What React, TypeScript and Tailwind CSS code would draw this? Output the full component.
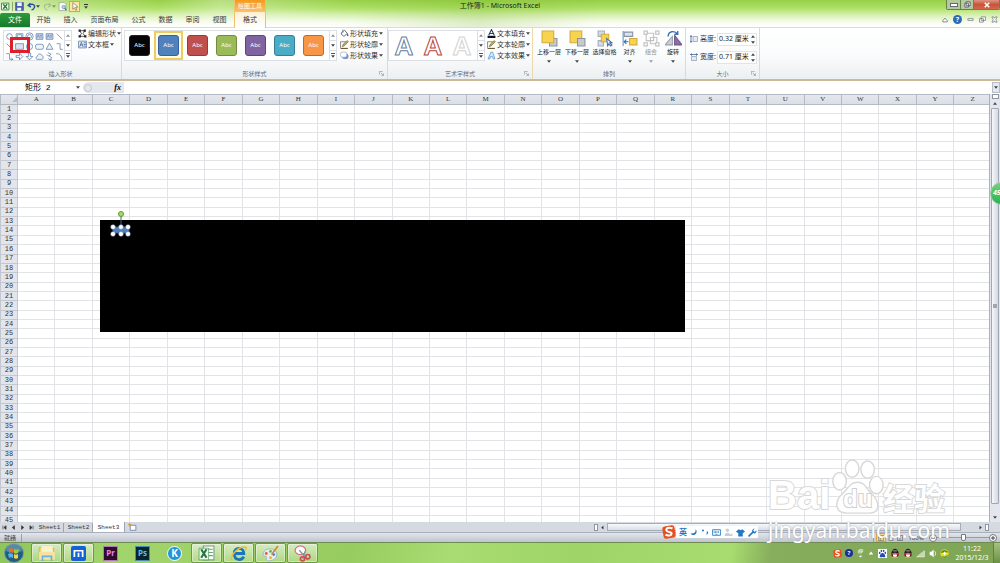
import type { ReactNode } from "react";

const columns = "ABCDEFGHIJKLMNOPQRSTUVWXYZ".split("");
const rows = Array.from({ length: 45 }, (_, i) => i + 1);

const tabs = [
  { name: "开始", width: "w-[27px]" },
  { name: "插入", width: "w-[27px]" },
  { name: "页面布局", width: "w-[41px]" },
  { name: "公式", width: "w-[27px]" },
  { name: "数据", width: "w-[27px]" },
  { name: "审阅", width: "w-[27px]" },
  { name: "视图", width: "w-[27px]" },
];

const swatches = [
  "bg-[#050505] border-[#222222]",
  "bg-[#4f81bd] border-[#38609a]",
  "bg-[#c0504d] border-[#963b39]",
  "bg-[#9bbb59] border-[#728c3d]",
  "bg-[#8064a2] border-[#5d477a]",
  "bg-[#4bacc6] border-[#348096]",
  "bg-[#f79646] border-[#bb6c2c]",
];

function Arrow({ up = false }: { up?: boolean }) {
  return (
    <svg viewBox="0 0 6 4" className="h-[3px] w-[4px] shrink-0 fill-[#444]">
      <path d={up ? "M0 4 3 0 6 4Z" : "M0 0h6L3 4Z"} />
    </svg>
  );
}

function Svg({ children, className = "h-[9px] w-[9px]" }: { children: ReactNode; className?: string }) {
  return (
    <svg viewBox="0 0 16 16" fill="none" className={`${className} shrink-0`}>
      {children}
    </svg>
  );
}

function Group({ title, width, children, launcher = true }: { title: string; width: string; children: ReactNode; launcher?: boolean }) {
  return (
    <section className={`${width} relative flex shrink-0 flex-col justify-between border-r border-[#ecd9ae] pt-[2px]`}>
      <div className="flex">{children}</div>
      <h2 className="text-center text-[6px] leading-[9px] text-[#5d6878]">{title}</h2>
      {launcher && (
        <button aria-label={title} className="absolute right-[3px] bottom-[3px]">
          <Svg className="h-[5px] w-[5px]">
            <path d="M1 12V1h11M6 6l8 8M14 8v6H8" stroke="#7d8693" strokeWidth="2" />
          </Svg>
        </button>
      )}
    </section>
  );
}

function Scroller() {
  return (
    <div className="flex w-[7px] flex-col border-l border-[#dcdfe3] bg-white">
      <button aria-label="上一行" className="flex flex-1 items-center justify-center opacity-60"><Arrow up /></button>
      <button aria-label="下一行" className="flex flex-1 items-center justify-center border-y border-[#dcdfe3]"><Arrow /></button>
      <button aria-label="其他" className="flex flex-1 flex-col items-center justify-center gap-px">
        <span className="h-px w-[4px] bg-[#555]" />
        <Arrow />
      </button>
    </div>
  );
}

function MenuItem({ icon, text }: { icon: ReactNode; text: string }) {
  return (
    <button className="flex h-[11px] items-center gap-[1px] whitespace-nowrap text-[7px] leading-[9px] text-[#333]">
      {icon}
      {text}
      <Arrow />
    </button>
  );
}

function BigButton({ icon, text, width, menu = true, off = false }: { icon: ReactNode; text: string; width: string; menu?: boolean; off?: boolean }) {
  return (
    <button className={`${width} ${off ? "opacity-50" : ""} flex flex-col items-center text-[6px] leading-[9px] whitespace-nowrap text-[#222]`}>
      {icon}
      <span className="mt-[1px]">{text}</span>
      {menu && <span className="mt-[3px]"><Arrow /></span>}
    </button>
  );
}

const shapes = [
  <circle cx="8" cy="8" r="5" />,
  <path d="M2 3h12v10H2zM4 5h8v6H4z" />,
  <g><circle cx="8" cy="8" r="6.5" /><circle cx="8" cy="8" r="3.5" /></g>,
  <path d="M2 3h12v10H2zM4 10l2-5 2 5M9 6h3M9 9h3" fill="#c9d8ec" />,
  <path d="M2 3h12v10H2zM4 10l2-5 2 5M9 6h3M9 9h3" fill="#c9d8ec" />,
  <path d="m3 3 10 10" />,
  <path d="m3 3 10 10" />,
  <path d="M1 3h14v10H1z" fill="#dbe5f2" />,
  <circle cx="8" cy="8" r="5.5" />,
  <rect x="1" y="4" width="14" height="9" rx="3" fill="#eef3fa" />,
  <path d="m8 2 6 11H2z" fill="#eef3fa" />,
  <path d="M3 3h6v10h5" />,
  <path d="M2 3h6v10h6m-3-3 3 3-3 2" />,
  <path d="M2 6h6V2l6 6-6 6v-4H2z" fill="#eef3fa" />,
  <path d="M6 2v6H2l6 6 6-6h-4V2z" fill="#eef3fa" />,
  <path d="M4 13c-4-1-2-5 0-5 0-5 7-6 8-2 4 1 3 7 0 7z" fill="#eef3fa" />,
  <path d="m5 1 6 3-4 3 5 3-3 4m-3-3 3 4 3-2M3 5l4 2" />,
  <path d="M2 3c7 0 9 3 11 11" />,
];

const textBox = (
  <Svg>
    <path d="M1 2h14v12H1z" fill="#e8f0fa" stroke="#6684ab" strokeWidth="1.5" />
    <path d="m3 12 3-8 3 8M4 9h4M10 5h4M10 8h4M10 11h4" stroke="#31598f" strokeWidth="1.3" />
  </Svg>
);
const pen = (
  <Svg>
    <path d="M1 14V3h9" stroke="#777" strokeWidth="1.5" />
    <path d="m4 12 2-5 7-6 2 2-7 7z" fill="#c9ad55" stroke="#655622" />
    <path d="M1 15h13" stroke="#6c5a36" strokeWidth="2" />
  </Svg>
);

function LetterA({ className }: { className: string }) {
  return <button aria-label="艺术字" className={`${className} w-[29px] pl-[1px] text-center font-[Arial,'Liberation_Sans',sans-serif] text-[26px] leading-[31px] font-bold text-white`}>A</button>;
}

function Size({ id, label, value, children }: { id: string; label: string; value: string; children: ReactNode }) {
  return (
    <div className="flex h-[14px] items-center gap-[1px] text-[7px] text-[#333]">
      <Svg className="h-[8px] w-[8px]">{children}</Svg>
      <label htmlFor={id} className="w-[17px] whitespace-nowrap pl-[1px]">{label}</label>
      <span className="flex h-[13px] flex-1 items-center border border-[#e1e4e8] bg-white">
        <input id={id} defaultValue={value} className="w-[32px] pl-[1px] text-[#222] outline-none" />
        <span className="flex flex-1 flex-col items-center gap-[3px]"><Arrow up /><Arrow /></span>
      </span>
    </div>
  );
}

function TitleBar() {
  return (
    <header className="relative h-[27px] shrink-0 bg-[linear-gradient(100deg,rgba(255,255,255,.6)_0,rgba(255,255,255,.25)_7%,transparent_16%,rgba(255,255,255,.3)_22%,transparent_35%,rgba(110,170,30,.2)_48%,transparent_60%),linear-gradient(#98cf48_0,#ace065_8px,#d7f0b1_15px,#f6fcec_22px,#ffffff_27px)]">
      <div className="flex h-[12px] items-center">
        <div className="flex w-[234px] items-center gap-[2px] pl-[1px]">
          <Svg>
            <path d="M1 2h13v12H1z" fill="#fff" stroke="#267a39" strokeWidth="1.5" />
            <path d="m4 4 7 8m0-8-7 8" stroke="#267a39" strokeWidth="2.5" />
          </Svg>
          <button aria-label="保存" className="flex border-l border-[#8aa56b] pl-[2px]">
            <Svg>
              <path d="M1 1h14v14H1z" fill="#4960b5" stroke="#33438d" />
              <path d="M4 1h8v6H4zM4 10h7v5H4z" fill="#f4f6fb" />
            </Svg>
          </button>
          <button aria-label="撤消" className="ml-[1px] flex items-center">
            <Svg><path d="M6 2 2 6l5 3M3 6c7-4 12-1 10 4-1 3-3 4-5 4" stroke="#2b4fae" strokeWidth="2.5" /></Svg>
            <Arrow />
          </button>
          <button aria-label="恢复" className="ml-[1px] flex items-center opacity-50">
            <Svg><path d="m10 2 4 4-5 3M13 6C6 2 1 5 3 10c1 3 3 4 5 4" stroke="#8b9a88" strokeWidth="2" /></Svg>
            <Arrow />
          </button>
          <button aria-label="打印预览" className="flex">
            <Svg>
              <path d="M2 1h9l3 3v11H2z" fill="#fff" stroke="#7f8896" />
              <circle cx="10" cy="9" r="3" fill="#bcd6f2" stroke="#4c6a92" />
              <path d="m12 11 3 4" stroke="#4c6a92" strokeWidth="2" />
            </Svg>
          </button>
          <button aria-label="选择对象" className="flex border border-[#e0a52d] bg-[#fde89a]">
            <Svg><path d="M5 1v12l3-3 2 5 2-1-2-5h4z" fill="#fff" stroke="#555" /></Svg>
          </button>
          <button aria-label="自定义" className="ml-[2px] flex flex-col items-center gap-px"><span className="h-px w-[4px] bg-[#333]" /><Arrow /></button>
        </div>
        <h1 className="flex-1 pr-[180px] text-center text-[7px] leading-[12px] text-[#222]">工作簿1 - Microsoft Excel</h1>
        <div className="flex h-[10px] w-[54px] self-start overflow-hidden rounded-b-[2px] border border-t-0 border-[#64834a]">
          <button aria-label="最小化" className="flex w-[14px] items-center justify-center border-r border-[#64834a] bg-[#b4ca9e]"><span className="h-[2px] w-[6px] bg-white outline outline-[#667]" /></button>
          <button aria-label="还原" className="flex w-[13px] items-center justify-center border-r border-[#64834a] bg-[#b4ca9e]">
            <Svg className="h-[7px] w-[7px]"><path d="M5 2h9v9H5zM2 5h8v9H2z" fill="#fff" stroke="#556" strokeWidth="2" /></Svg>
          </button>
          <button aria-label="关闭" className="flex flex-1 items-center justify-center bg-linear-to-b from-[#dc9583] via-[#c8523a] to-[#d36a4c]">
            <Svg className="h-[6px] w-[6px]"><path d="m2 2 12 12M14 2 2 14" stroke="#fff" strokeWidth="4" /></Svg>
          </button>
        </div>
      </div>
      <nav className="flex h-[15px] items-center text-[7px] text-[#3b3b3b]">
        <button className="mt-[1px] h-[14px] w-[30px] rounded-t-[2px] bg-linear-to-b from-[#2d9a3d] to-[#157a2c] text-white">文件</button>
        {tabs.map((t) => (
          <button key={t.name} className={`${t.width} pt-[2px] whitespace-nowrap`}>{t.name}</button>
        ))}
        <div className="flex-1" />
        <div className="flex items-center gap-[5px] pr-[2px]">
          <button aria-label="功能区最小化"><Svg className="h-[6px] w-[6px]"><path d="m2 10 6-7 6 7v3H2z" fill="#fff" stroke="#667" strokeWidth="2" /></Svg></button>
          <button aria-label="帮助" className="h-[9px] w-[9px] rounded-full bg-[#2f69b8] text-[7px] leading-[9px] font-bold text-white">?</button>
          <button aria-label="最小化窗口"><Svg className="h-[7px] w-[7px]"><path d="M2 6h12v4H2z" fill="#fff" stroke="#667" strokeWidth="1.5" /></Svg></button>
          <button aria-label="还原窗口"><Svg className="h-[7px] w-[7px]"><path d="M5 2h10v8H5zM1 6h9v8H1z" fill="#fff" stroke="#667" strokeWidth="1.5" /></Svg></button>
          <button aria-label="关闭窗口"><Svg className="h-[7px] w-[7px]"><path d="M2 2h4l2 3 2-3h4l-3 6 3 6h-4l-2-3-2 3H2l3-6z" fill="#fff" stroke="#667" strokeWidth="1.5" /></Svg></button>
        </div>
      </nav>
      {/* Contextual tab */}
      <div className="absolute top-0 left-[234px] flex h-[28px] w-[32px] flex-col border-x border-[#f0c070] bg-white text-center text-[7px]">
        <span className="h-[12px] bg-linear-to-b from-[#f39a1c] to-[#fbc266] text-[6px] leading-[12px] text-white">绘图工具</span>
        <button className="h-[15px] bg-linear-to-b from-[#fef0d3] to-white pt-[2px] text-[#3b3b3b]">格式</button>
      </div>
    </header>
  );
}

function Ribbon() {
  return (
    <div className="flex h-[54px] shrink-0 border-t border-b-2 border-t-[#ecd9ae] border-b-[#cdb995] bg-linear-to-b from-white via-[#fbfcfd] to-[#eceff2]">
      <Group title="插入形状" width="w-[122px]" launcher={false}>
        <div className="relative ml-[3px] flex h-[31px] border border-[#dcdfe3] bg-white">
          <div className="grid grid-cols-6">
            {shapes.map((s, i) => (
              <button key={i} aria-label={`形状 ${i + 1}`} className="flex h-[10px] w-[10px] items-center justify-center">
                <Svg className="h-[9px] w-[9px] stroke-[#5b7ba8] stroke-[1.3]">{s}</Svg>
              </button>
            ))}
          </div>
          <Scroller />
          <span className="absolute top-[6px] left-[6px] h-[16px] w-[20px] border-[3px] border-[#dd1f2c]" />
        </div>
        <div className="-mt-[2px] ml-[6px] flex flex-col">
          <MenuItem text="编辑形状" icon={<Svg><path d="M3 3h9L9 8l4 5H3l3-5z" stroke="#222" strokeWidth="1.3" /><path d="M1 1h4v4H1zM10 1h4v4h-4zM1 11h4v4H1zM11 11h4v4h-4z" fill="#222" /></Svg>} />
          <MenuItem text="文本框" icon={textBox} />
        </div>
      </Group>

      <Group title="形状样式" width="w-[266px]">
        <div className="ml-[2px] flex h-[31px] border border-[#dcdfe3] bg-white">
          {swatches.map((s, i) => (
            <button key={s} className={`flex h-[29px] w-[29px] items-center justify-center border-2 ${i === 1 ? "border-[#edcc60] bg-[#fffbe8]" : "border-transparent"}`}>
              <span className={`${s} flex h-[21px] w-[21px] items-center justify-center rounded-[3px] border text-[6px] text-white`}>Abc</span>
            </button>
          ))}
          <div className="w-[1px]" />
          <Scroller />
        </div>
        <div className="-mt-[2px] ml-[3px] flex flex-col">
          <MenuItem text="形状填充" icon={<Svg><path d="m3 6 5-4 5 6-6 5-5-4z" fill="#fff" stroke="#456" strokeWidth="1.5" /><path d="M13 7c2 3 3 6 1 6s-2-3-1-6" fill="#38609a" /><path d="M5 7V1" stroke="#456" /></Svg>} />
          <MenuItem text="形状轮廓" icon={pen} />
          <MenuItem text="形状效果" icon={<Svg><rect x="4" y="5" width="11" height="9" rx="3" fill="#7895c4" /><rect x="1" y="2" width="11" height="9" rx="3" fill="#fff" stroke="#7c9ccb" /></Svg>} />
        </div>
      </Group>

      <Group title="艺术字样式" width="w-[145px]">
        <div className="flex h-[31px] border border-[#dcdfe3] bg-white">
          <LetterA className="[-webkit-text-stroke:1px_#67809f]" />
          <LetterA className="[-webkit-text-stroke:1px_#b94441]" />
          <LetterA className="[-webkit-text-stroke:1px_#d2d2d2]" />
          <div className="w-[1px]" />
          <Scroller />
        </div>
        <div className="-mt-[2px] ml-[2px] flex flex-col">
          <MenuItem text="文本填充" icon={<Svg><path d="m3 11 5-10 5 10M5 8h6" stroke="#27405f" strokeWidth="2" /><path d="M1 12h14v4H1z" fill="#111" /></Svg>} />
          <MenuItem text="文本轮廓" icon={pen} />
          <MenuItem text="文本效果" icon={<Svg><path d="M2 14 7 2h3l4 12h-3l-1-4H6l-1 4z" fill="#d6eafa" stroke="#5c9fda" strokeWidth="1.5" /></Svg>} />
        </div>
      </Group>

      <Group title="排列" width="w-[153px]" launcher={false}>
        <BigButton width="ml-[2px] w-[28px]" text="上移一层" icon={<Svg className="h-[17px] w-[17px]"><path d="M8 8h7v7H8z" fill="#c5cad1" stroke="#8d939b" /><path d="M1 1h11v11H1z" fill="#f7d34f" stroke="#d5ac35" /></Svg>} />
        <BigButton width="w-[28px]" text="下移一层" icon={<Svg className="h-[17px] w-[17px]"><path d="M1 1h11v11H1z" fill="#f7d34f" stroke="#d5ac35" /><path d="M8 8h7v7H8z" fill="#c5cad1" stroke="#8d939b" /></Svg>} />
        <BigButton width="w-[27px]" menu={false} text="选择窗格" icon={<Svg className="h-[17px] w-[17px]"><path d="M2 1h6v5H2zM2 10h5v5H2z" fill="#d4dce7" stroke="#a3adbb" /><path d="M5 4h7v7H5z" fill="#f7d34f" stroke="#d5ac35" /><path d="m10 8 1 7 1-2 2 2 1-1-2-2h2z" fill="#fff" stroke="#4670a8" /></Svg>} />
        <BigButton width="w-[23px]" text="对齐" icon={<Svg className="h-[17px] w-[17px]"><path d="M2 1v14" stroke="#6a90c5" /><path d="M3 2h8v4H3z" fill="#dbe3ee" stroke="#8793a4" /><path d="M8 8h7v6H8z" fill="#f7d34f" stroke="#d5ac35" /><path d="M7 11H3m2-2-2 2 2 2" stroke="#2d69b3" /></Svg>} />
        <BigButton width="w-[20px]" off text="组合" icon={<Svg className="h-[17px] w-[17px]"><path d="M3 3h7v7H3zM7 7h6v6H7z" stroke="#888" /><path d="M1 1h3v3H1zM12 1h3v3h-3zM1 12h3v3H1zM12 12h3v3h-3z" fill="#fff" stroke="#777" /></Svg>} />
        <BigButton width="w-[24px]" text="旋转" icon={<Svg className="h-[17px] w-[17px]"><path d="M7 6v8H0z" fill="#cbd0d8" stroke="#9da3ad" /><path d="M9 5v9h7z" fill="#8c6fa8" stroke="#73598c" /><path d="M3 6c0-5 6-6 9-2m0-3v3H9" stroke="#3b70b8" strokeWidth="1.3" /></Svg>} />
      </Group>

      <Group title="大小" width="w-[74px]">
        <div className="flex flex-1 flex-col gap-[4px] pt-[2px] pr-[2px] pl-[4px]">
          <Size id="shape-height" label="高度:" value="0.32 厘米"><path d="M6 3h9v10H6z" fill="#e3eaf3" stroke="#66768d" /><path d="M2 2v12M0 4l2-3 2 3M0 12l2 3 2-3" stroke="#345b91" strokeWidth="1.5" /></Size>
          <Size id="shape-width" label="宽度:" value="0.71 厘米"><path d="M3 7h10v8H3z" fill="#e3eaf3" stroke="#66768d" /><path d="M1 3h14M4 1 1 3l3 2M12 1l3 2-3 2" stroke="#345b91" strokeWidth="1.5" /></Size>
        </div>
      </Group>
    </div>
  );
}

function FormulaBar() {
  return (
    <div className="flex h-[13px] shrink-0 items-center bg-white text-[7px]">
      <input aria-label="名称框" defaultValue="矩形 2" className="w-[76px] pl-[25px] font-['Liberation_Mono','Noto_Sans_CJK_SC',monospace] text-[8px] leading-[11px] outline-none" />
      <Arrow />
      <div className="ml-[3px] flex h-[11px] w-[41px] items-center justify-between rounded-l-full bg-[#e4e7ec] pr-[3px]">
        <span className="ml-[1px] h-[8px] w-[8px] rounded-full border border-[#c5cad2]" />
        <button className="font-['Liberation_Serif',serif] text-[8px] font-bold italic">fx</button>
      </div>
      <input aria-label="编辑栏" className="min-w-0 flex-1 outline-none" />
      <button aria-label="展开编辑栏" className="flex h-[11px] w-[8px] items-center justify-center border border-[#b7bdc7] bg-[#e4e8ee]"><Arrow /></button>
    </div>
  );
}

function Sheet() {
  return (
    <main className="relative flex min-h-0 flex-1 overflow-hidden bg-white">
      <div className="min-w-0 flex-1 overflow-hidden">
        <table className="h-[432px] w-[calc(100%+3px)] table-fixed border-collapse font-['Liberation_Serif',serif] text-[7px] leading-[7px] text-[#333]">
          <thead>
            <tr className="h-[10px] bg-linear-to-b from-[#e4e8ed] to-[#d9dee5]">
              <th aria-label="全选" className="w-[17px] border border-[#b4bac4] p-0">
                <svg viewBox="0 0 6 6" className="ml-auto h-[5px] w-[5px] fill-[#b9c0ca]"><path d="M6 0v6H0z" /></svg>
              </th>
              {columns.map((c) => (
                <th key={c} className="border border-[#b4bac4] p-0 font-normal">{c}</th>
              ))}
            </tr>
          </thead>
          <tbody>
            {rows.map((r) => (
              <tr key={r}>
                <th className="border border-[#c3c8d0] bg-[#e2e6ec] p-0 font-['Liberation_Mono',monospace] font-normal">{r}</th>
                {columns.map((c) => (
                  <td key={c} className="border border-[#e2e3e6] p-0" />
                ))}
              </tr>
            ))}
          </tbody>
        </table>
      </div>
      <div className="flex w-[11px] flex-col items-center border-l border-[#aab1bd] bg-[#e3e7ed]">
        <span className="h-[5px] w-[7px] border border-[#8e96a3] bg-white" />
        <button aria-label="向上" className="flex h-[9px] items-center"><Arrow up /></button>
        <div className="flex w-[8px] flex-1 items-center justify-center rounded-[1px] border border-[#a0a8b6] bg-linear-to-r from-[#f6f8fa] to-[#d3d9e2]">
          <span className="h-[4px] w-[4px] bg-[#a0a6b0]" />
        </div>
        <button aria-label="向下" className="flex h-[18px] items-center pt-[8px]"><Arrow /></button>
      </div>

      {/* Drawn shapes */}
      <div className="absolute top-[126px] left-[100px] h-[112px] w-[585px] bg-black" />
      <svg viewBox="0 0 24 30" className="absolute top-[115px] left-[109px] h-[30px] w-[24px]">
        <path d="M12 5v14" stroke="#45617f" />
        <path d="M4 18h16v6H4z" fill="#4f81bd" stroke="#38609a" />
        <circle cx="12" cy="5" r="2.5" fill="#a7da67" stroke="#5c9a2c" />
        <g fill="#fff" stroke="#8fa5bd" strokeWidth=".5">
          <circle cx="4" cy="18" r="2.3" /><circle cx="12" cy="18" r="2.3" /><circle cx="19" cy="18" r="2.3" />
          <circle cx="4" cy="25" r="2.3" /><circle cx="12" cy="25" r="2.3" /><circle cx="19" cy="25" r="2.3" />
        </g>
      </svg>
      <button className="absolute top-[88px] -right-[13px] h-[23px] w-[23px] rounded-full border border-[#a7c9ad] bg-linear-to-b from-[#6bd47b] to-[#2db14c] pl-[2px] text-left text-[7px] font-bold text-white italic">45</button>
    </main>
  );
}

function SheetTabs() {
  return (
    <div className="flex h-[10px] shrink-0 items-center bg-[#d5dae1] font-['Liberation_Mono',monospace] text-[6px] leading-[9px] text-[#333]">
      <div className="flex w-[36px] items-center gap-[4px] pl-[2px]">
        {["M3 2v12M13 2 6 8l7 6z", "M11 2 4 8l7 6z", "m5 2 7 6-7 6z", "M13 2v12M3 2l7 6-7 6z"].map((d) => (
          <button key={d} aria-label="切换工作表" className="flex">
            <Svg className="h-[5px] w-[5px] fill-[#333] stroke-[#333] stroke-2"><path d={d} /></Svg>
          </button>
        ))}
      </div>
      <button className="w-[28px] border-r border-[#9ba3af]">Sheet1</button>
      <button className="w-[29px] border-r border-[#9ba3af] pl-[1px]">Sheet2</button>
      <button className="h-full w-[32px] border-r border-[#9ba3af] bg-white">Sheet3</button>
      <button aria-label="插入工作表" className="ml-[3px] flex">
        <Svg><path d="M4 4h10v9H4z" fill="#fff" stroke="#6681a8" strokeWidth="1.5" /><path d="M3 0v6M0 3h6" stroke="#e39a28" strokeWidth="2" /></Svg>
      </button>
      <div className="flex-1" />
      <div className="flex h-full w-[406px] items-center gap-[2px] pr-[11px]">
        <span className="h-[7px] w-[4px] border border-[#8e96a3] bg-white" />
        <Svg className="h-[5px] w-[5px]"><path d="m11 2-7 6 7 6z" fill="#333" /></Svg>
        <span className="h-[8px] w-[354px] border border-[#a5adba] bg-linear-to-b from-[#f7f9fb] to-[#d9dfe7]" />
        <span className="flex-1" />
        <Svg className="h-[5px] w-[5px]"><path d="m5 2 7 6-7 6z" fill="#333" /></Svg>
        <span className="h-[7px] w-[4px] border border-[#8e96a3] bg-white" />
      </div>
    </div>
  );
}

function StatusBar() {
  return (
    <footer className="flex h-[10px] shrink-0 items-center border-t border-[#a9b0bb] bg-linear-to-b from-[#e3e6eb] to-[#bfc5ce] text-[6px] leading-[8px] text-[#333]">
      <span className="w-[22px] border-r border-[#9aa1ac] pl-[4px]">就绪</span>
      <div className="flex-1" />
      <div className="flex items-center border-l border-[#9aa1ac] pl-[2px]">
        <button aria-label="普通" className="flex h-[9px] w-[10px] items-center justify-center border border-[#dca638] bg-[#fbdc83]"><Svg className="h-[6px] w-[6px]"><path d="M1 1h14v14H1zM1 6h14M6 1v14" stroke="#777" strokeWidth="2" /></Svg></button>
        <button aria-label="页面布局" className="flex w-[9px] justify-center"><Svg className="h-[6px] w-[6px]"><path d="M3 1h10v14H3z" fill="#eee" stroke="#666" strokeWidth="2" /></Svg></button>
        <button aria-label="分页预览" className="flex w-[9px] justify-center"><Svg className="h-[6px] w-[6px]"><path d="M1 1h14v14H1zM8 1v14" stroke="#666" strokeWidth="2" /></Svg></button>
      </div>
      <span className="w-[24px] text-center">100%</span>
      <button aria-label="缩小" className="ml-[1px] flex h-[8px] w-[8px] items-center justify-center rounded-full border border-[#777] bg-white"><Svg className="h-[4px] w-[4px]"><path d="M0 8h16" stroke="#444" strokeWidth="4" /></Svg></button>
      <input type="range" aria-label="显示比例" className="h-[8px] w-[52px] appearance-none bg-[linear-gradient(transparent_3px,#959ca7_3px,#959ca7_4px,transparent_4px)] [&::-webkit-slider-thumb]:h-[7px] [&::-webkit-slider-thumb]:w-[5px] [&::-webkit-slider-thumb]:appearance-none [&::-webkit-slider-thumb]:rounded-b-[2px] [&::-webkit-slider-thumb]:border [&::-webkit-slider-thumb]:border-[#777] [&::-webkit-slider-thumb]:bg-white" />
      <button aria-label="放大" className="mr-[3px] flex h-[8px] w-[8px] items-center justify-center rounded-full border border-[#777] bg-white"><Svg className="h-[4px] w-[4px]"><path d="M0 8h16M8 0v16" stroke="#444" strokeWidth="4" /></Svg></button>
    </footer>
  );
}

function Task({ label, open = false, children }: { label: string; open?: boolean; children: ReactNode }) {
  return (
    <button aria-label={label} className={`flex h-[20px] w-[31px] items-center justify-center rounded-[2px] border ${open ? "border-[#6f9a45] bg-linear-to-b from-white/60 to-white/20 inset-ring inset-ring-white/40" : "border-transparent"}`}>
      {children}
    </button>
  );
}

function Sogou({ className }: { className: string }) {
  return (
    <Svg className={className}>
      <rect x="1" y="1" width="14" height="14" rx="3" fill="#e8501e" transform="rotate(-10 8 8)" />
      <path d="M12 4C8 2 4 4 5 6c1 3 6 1 6 4 0 2-4 3-7 1" stroke="#fff" strokeWidth="2.3" />
    </Svg>
  );
}

function Qq() {
  return (
    <Svg className="h-[10px] w-[10px]">
      <ellipse cx="8" cy="9" rx="6" ry="6" fill="#222" />
      <circle cx="8" cy="5" r="4" fill="#222" />
      <ellipse cx="8" cy="11" rx="3.5" ry="3.5" fill="#fff" />
      <path d="M2 7c3 2 9 2 12 0v4c-3-1-9-1-12 0z" fill="#e02a3c" />
      <path d="M3 15h10" stroke="#f0a020" strokeWidth="2" />
      <circle cx="6.5" cy="4.5" r="1" fill="#fff" />
      <circle cx="9.5" cy="4.5" r="1" fill="#fff" />
    </Svg>
  );
}

function Taskbar() {
  return (
    <div className="flex h-[21px] shrink-0 items-center border-t border-[#6f8c52] bg-[linear-gradient(100deg,#8fc65a_0,#a2d46c_12%,#97cc60_35%,#a9dc72_45%,#9ed468_58%,#a8dc70_73%,#86ae5c_77%,#7fa456_100%)]">
      <button aria-label="开始" className="flex w-[31px] items-center pl-[4px]">
        <svg viewBox="0 0 20 20" className="h-[20px] w-[20px]">
          <circle cx="10" cy="10" r="9.5" fill="#245d7c" stroke="#6ba3a8" />
          <path d="M2 8a8 8 0 0 1 16 0c-5 2-11 2-16 0" fill="#8fb7c4" opacity=".5" />
          <path d="M5 6c2-1 3-1 4 0v4c-1-1-3-1-4 0z" fill="#ef6a30" />
          <path d="M10 6c2 1 3 1 5 0l-1 4c-2 1-3 1-4 0z" fill="#97cc43" />
          <path d="M4 11c2-1 3-1 5 0v4c-2-1-3-1-4 0z" fill="#54b2ef" />
          <path d="M10 11c1 1 3 1 4 0v4c-1 1-3 1-4 0z" fill="#fbd244" />
        </svg>
      </button>
      <div className="flex gap-[1px]">
        <Task label="资源管理器" open><Svg className="h-[18px] w-[18px]"><path d="M1 3h5l1 1h7v10H1z" fill="#efd37b" stroke="#d0a848" strokeWidth=".6" /><path d="M3 2h10v5H3z" fill="#fcf3cc" /><path d="M1 7h14v7H1z" fill="#f7e3a0" /><path d="M4 15v-4h8v4" stroke="#68b3df" strokeWidth="1.5" /></Svg></Task>
        <Task label="傲游" open><span className="flex h-[15px] w-[15px] items-center justify-center rounded-[2px] bg-[#1463d6]"><Svg className="h-[11px] w-[11px]"><path d="M2 13V4h12v9M8 7v6" stroke="#fff" strokeWidth="2.5" /></Svg></span></Task>
        <Task label="Premiere"><span className="h-[15px] w-[15px] border border-[#b07cb0] bg-[#32092f] text-[8px] leading-[12px] font-bold text-[#e588ec]">Pr</span></Task>
        <Task label="Photoshop"><span className="h-[15px] w-[15px] border border-[#4c8fa8] bg-[#092532] text-[8px] leading-[12px] font-bold text-[#55c5ee]">Ps</span></Task>
        <Task label="酷狗"><span className="h-[15px] w-[15px] rounded-full border border-white bg-[#2295d7] text-[10px] leading-[13px] font-bold text-white">K</span></Task>
        <Task label="Excel" open><Svg className="h-[17px] w-[17px]"><path d="M5 1h10v13H5z" fill="#fff" stroke="#7e9d84" /><path d="M8 4h6M8 7h6M8 10h6" stroke="#69a77a" /><path d="M1 3h9v11H1z" fill="#eef8ee" stroke="#35894a" strokeWidth=".6" /><path d="m3 4 5 8m0-8-5 8" stroke="#22783a" strokeWidth="2" /></Svg></Task>
        <Task label="Internet Explorer" open><Svg className="h-[17px] w-[17px]"><path d="M13 11c-2 4-9 4-9-3s9-6 9 0H5" stroke="#1976bd" strokeWidth="2.6" /><path d="M2 14c-3-2 5-13 13-12 1 1 0 2-1 3" stroke="#edbc32" strokeWidth="1.3" /></Svg></Task>
        <Task label="画图" open><Svg className="h-[17px] w-[17px]"><path d="M1 9c0-5 7-7 11-4 5 5 0 10-6 10-3 0-1-3-2-4S1 11 1 9" fill="#e4edf3" stroke="#8fa8b8" strokeWidth=".7" /><circle cx="4" cy="8" r="1.3" fill="#e55a3d" /><circle cx="8" cy="6" r="1.3" fill="#69b045" /><circle cx="11" cy="9" r="1.3" fill="#4286c8" /><circle cx="8" cy="12" r="1.3" fill="#e6b52f" /><path d="m9 9 6-8" stroke="#c88741" strokeWidth="1.5" /></Svg></Task>
        <Task label="截图工具" open><Svg className="h-[17px] w-[17px]"><ellipse cx="6" cy="5" rx="5" ry="4" fill="#fff" stroke="#cf6470" /><path d="m5 5 8 9M11 5l-3 8" stroke="#8695a0" strokeWidth="1.3" /><circle cx="8" cy="13" r="2" stroke="#d34951" strokeWidth="1.5" /><circle cx="13" cy="11" r="2" stroke="#d34951" strokeWidth="1.5" /></Svg></Task>
      </div>
      <div className="flex-1" />
      <div className="flex items-center gap-[3px]">
        <Sogou className="h-[9px] w-[9px]" />
        <span className="h-[8px] w-[8px] rounded-full bg-[#1d2f9c] text-center text-[6px] leading-[8px] font-bold text-white">?</span>
        <Svg className="h-[9px] w-[9px]"><path d="M6 1h6v4H6zM4 3h6v4H4z" stroke="#fff" /><path d="M5 12h6l-3 3z" fill="#fff" /></Svg>
        <Svg className="h-[6px] w-[6px]"><path d="m8 4 6 8H2z" fill="#fff" /></Svg>
        <Svg className="ml-[1px] h-[9px] w-[9px]"><path d="M0 0h16v16H0z" fill="#fff" /><path d="M3 13c0-3 3-6 5-6s5 3 5 6c0 2-3 2-5 1-2 1-5 1-5-1" fill="#2a48b8" /><ellipse cx="3" cy="7" rx="1.5" ry="2" fill="#2a48b8" /><ellipse cx="6" cy="3.5" rx="1.5" ry="2" fill="#2a48b8" /><ellipse cx="10" cy="3.5" rx="1.5" ry="2" fill="#2a48b8" /><ellipse cx="13" cy="7" rx="1.5" ry="2" fill="#2a48b8" /></Svg>
        <Qq />
        <Qq />
        <Svg className="h-[9px] w-[9px]"><path d="M1 14 15 3v11z" fill="#c6d5b6" stroke="#eef5e4" /></Svg>
        <Svg className="h-[9px] w-[9px]"><path d="M3 5h3l4-4v14l-4-4H3z" fill="#fff" /><path d="M12 4c2 2 2 6 0 8" stroke="#fff" strokeWidth="1.5" /></Svg>
        <Svg className="h-[9px] w-[9px]"><circle cx="8" cy="8" r="7.5" fill="#f1d51f" /><path d="M1 7c4-8 11-5 14-1-5-1-10 0-14 1M2 12c5 3 9 1 12-2-1 7-9 7-12 2" fill="#3a9b2c" /><path d="M8 5v6M5 8h6" stroke="#fff" strokeWidth="2" /></Svg>
      </div>
      <time className="w-[42px] pl-[4px] text-center text-[7px] leading-[9px] text-white">11:22<br />2015/12/3</time>
      <button aria-label="显示桌面" className="ml-[2px] h-full w-[7px] border-l border-[#60813f] bg-linear-to-b from-[#a5c183] to-[#6c9145]" />
    </div>
  );
}

// Sogou input method bar, floats over the status bar
function ImeBar() {
  return (
    <div className="absolute right-[242px] bottom-[24px] flex items-center">
      <Sogou className="z-10 h-[14px] w-[14px]" />
      <div className="flex h-[12px] w-[82px] items-center justify-between rounded-[1px] bg-white pr-[1px] pl-[3px] text-[8px] font-bold text-[#1e78c8]">
        <span>英</span>
        <Svg className="h-[8px] w-[8px]"><path d="M11 1c2 7-3 11-10 10 6 7 17 1 10-10" fill="#1e78c8" /></Svg>
        <Svg className="h-[8px] w-[8px]"><circle cx="4" cy="5" r="2" fill="#1e78c8" /><path d="M11 7h3c1 4-1 6-4 7 2-2 2-4 1-7" fill="#1e78c8" /></Svg>
        <Svg><path d="M1 3h14v10H1z" stroke="#1e78c8" strokeWidth="1.5" /><path d="M3 6h10M3 8h10M5 11h6" stroke="#1e78c8" strokeWidth="1.5" strokeDasharray="1.5 1" /></Svg>
        <Svg className="h-[9px] w-[9px]"><circle cx="6" cy="4" r="3" fill="#c8ced4" /><path d="M1 14c0-7 8-7 10-3l4-1v4z" fill="#c8ced4" /></Svg>
        <Svg><path d="m5 2 3 2 3-2 5 4-3 3-1-1v7H4V8L3 9 0 6z" fill="#1e78c8" /></Svg>
        <Svg className="h-[9px] w-[9px]"><path d="m2 14 6-6" stroke="#1e78c8" strokeWidth="3" strokeLinecap="round" /><path d="M12 1 9 4l3 3 3-3c1 4-3 7-6 5S7 1 12 1" fill="#1e78c8" /></Svg>
      </div>
    </div>
  );
}

function Watermark() {
  return (
    <div className="pointer-events-none absolute right-[52px] bottom-[18px] w-[180px] text-white">
      <div className="flex h-[58px] items-end font-bold">
        <span className="w-[62px] text-[40px] leading-[41px] font-[Arial,'Liberation_Sans',sans-serif] [paint-order:stroke_fill] [-webkit-text-stroke:2px_#d8d8d8]">Bai</span>
        <div className="relative h-[58px] w-[50px]">
          <svg viewBox="0 0 54 60" className="h-[58px] w-[54px]" fill="#fff" stroke="#d8d8d8" strokeWidth="1.5">
            <ellipse cx="9" cy="24" rx="7" ry="9" />
            <ellipse cx="22" cy="11" rx="7" ry="9" />
            <ellipse cx="38" cy="12" rx="7" ry="9" />
            <ellipse cx="47" cy="28" rx="7" ry="9" />
            <path d="M28 25c7 0 9 7 14 12 8 7 10 20-2 20H17C3 57 4 44 12 37c6-6 8-12 16-12Z" />
          </svg>
          <span className="absolute bottom-[3px] left-[13px] text-[24px] leading-[28px] font-[Arial,'Liberation_Sans',sans-serif] [paint-order:stroke_fill] [-webkit-text-stroke:2px_#d0d0d0]">du</span>
        </div>
        <span className="pl-[3px] text-[31px] leading-[36px] [paint-order:stroke_fill] [-webkit-text-stroke:2px_#d8d8d8]">经验</span>
      </div>
      <p className="font-['Noto_Sans',sans-serif] text-[21px] leading-[29px] [text-shadow:0_0_2px_#999]">jingyan.baidu.com</p>
    </div>
  );
}

export default function App() {
  return (
    <div className="relative flex h-screen flex-col overflow-hidden bg-white font-['Noto_Sans','Noto_Sans_CJK_SC',sans-serif]">
      <TitleBar />
      <Ribbon />
      <FormulaBar />
      <Sheet />
      <SheetTabs />
      <StatusBar />
      <Taskbar />
      <ImeBar />
      <Watermark />
    </div>
  );
}
